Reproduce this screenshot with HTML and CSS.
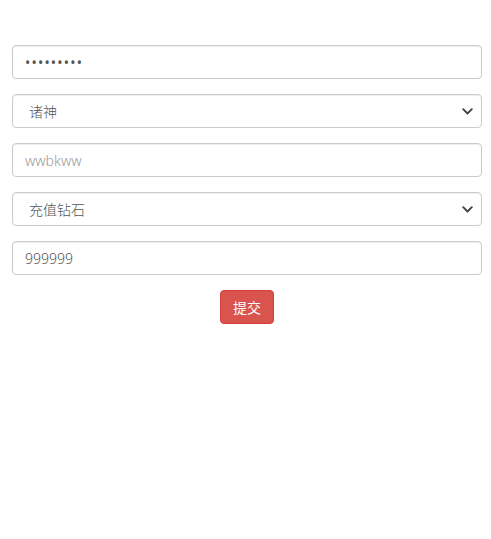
FILE: index.html
```html
<!DOCTYPE html>
<html>
<head>
<meta charset="utf-8">
<link rel="stylesheet" href="styles.css">
</head>
<body>
<form class="form">
  <input class="field pass" type="password" value="123456789">
  <div class="select-wrap">
    <select class="field select"><option>诸神</option></select>
    <svg class="chev" width="11" height="7" viewBox="0 0 11 7"><path d="M1.2 1.2 L5.5 5.5 L9.8 1.2" fill="none" stroke="#444" stroke-width="1.9" stroke-linecap="round" stroke-linejoin="round"/></svg>
  </div>
  <input class="field" type="text" placeholder="wwbkww">
  <div class="select-wrap">
    <select class="field select"><option>充值钻石</option></select>
    <svg class="chev" width="11" height="7" viewBox="0 0 11 7"><path d="M1.2 1.2 L5.5 5.5 L9.8 1.2" fill="none" stroke="#444" stroke-width="1.9" stroke-linecap="round" stroke-linejoin="round"/></svg>
  </div>
  <input class="field" type="text" value="999999">
  <div class="actions"><button class="btn" type="button">提交</button></div>
</form>
</body>
</html>
```
FILE: styles.css
```css
html, body {
  margin: 0;
  padding: 0;
  background: #fff;
  font-family: "Noto Sans", "Noto Sans CJK SC", sans-serif;
}
.form {
  width: 470px;
  margin: 45px 0 0 12px;
  display: flex;
  flex-direction: column;
  gap: 15px;
}
.field {
  box-sizing: border-box;
  width: 100%;
  height: 34px;
  margin: 0;
  padding: 6px 12px;
  border: 1px solid #ccc;
  border-radius: 4px;
  background: #fff;
  color: #555;
  font-family: "Noto Sans", "Noto Sans CJK SC", sans-serif;
  font-size: 14px;
  font-weight: 300;
  outline: none;
  box-shadow: inset 0 1px 1px rgba(0,0,0,0.075);
}
.pass {
  font-weight: 400;
  letter-spacing: 1.2px;
}
.field::placeholder { color: #999; }
.select-wrap { position: relative; }
.select {
  appearance: none;
  -webkit-appearance: none;
  padding-left: 16px;
}
.chev {
  position: absolute;
  right: 9px;
  top: 14px;
  pointer-events: none;
}
.actions {
  display: flex;
  justify-content: center;
}
.btn {
  height: 34px;
  padding: 0 12px;
  border: 1px solid #d43f3a;
  border-radius: 4px;
  background: #d9534f;
  color: #fff;
  font-family: "Noto Sans CJK SC", sans-serif;
  font-size: 14px;
}
```
